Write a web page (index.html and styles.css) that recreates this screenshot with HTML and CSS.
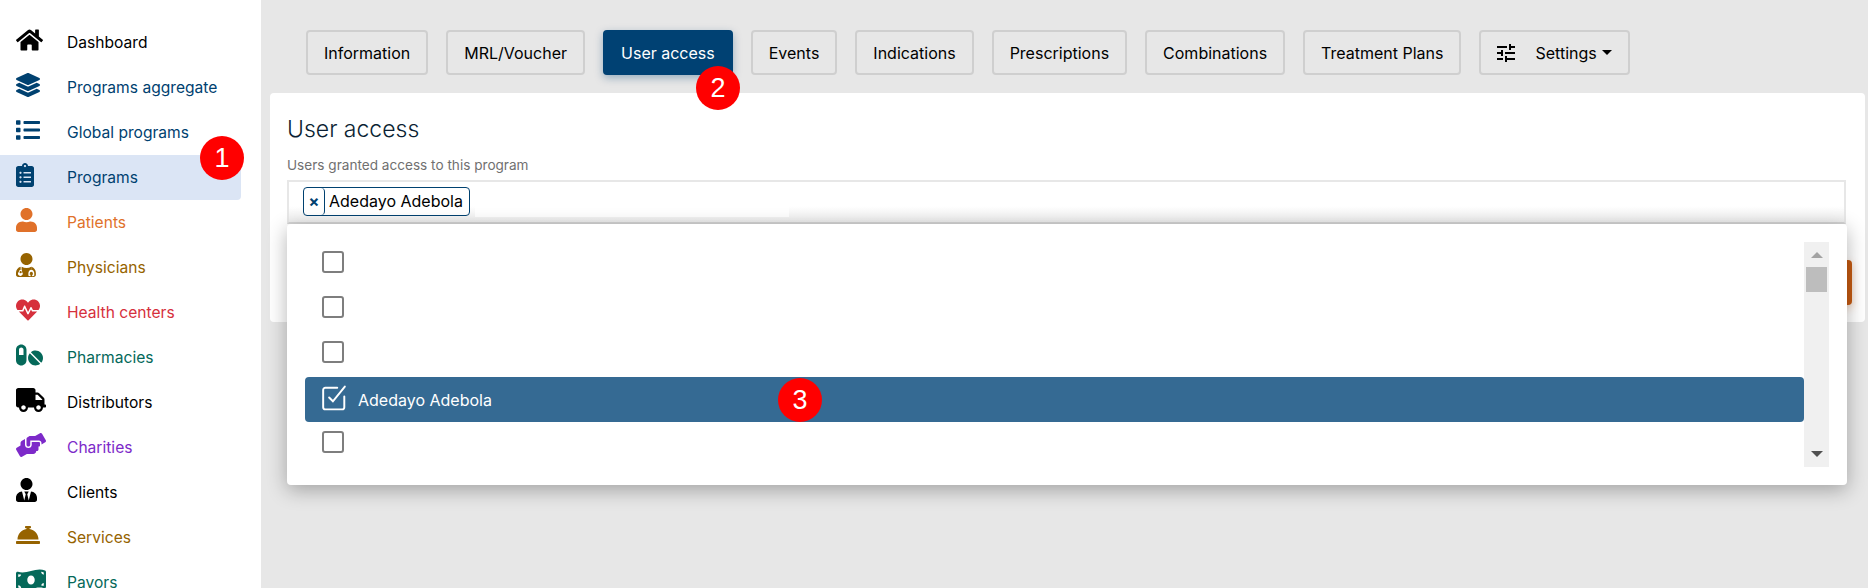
FILE: index.html
```html
<!DOCTYPE html>
<html lang="en">
<head>
<meta charset="utf-8">
<title>User access</title>
<link rel="stylesheet" href="styles.css">
</head>
<body>
<div class="app">
  <nav class="sidebar">
    <a class="nav-item c-black"><span class="nav-icon"><svg viewBox="0 0 576 512"><path d="M280.37 148.26L96 300.11V464a16 16 0 0 0 16 16l112.06-.29a16 16 0 0 0 15.92-16V368a16 16 0 0 1 16-16h64a16 16 0 0 1 16 16v95.64a16 16 0 0 0 16 16.05L464 480a16 16 0 0 0 16-16V300L295.67 148.26a12.19 12.19 0 0 0-15.3 0zM571.6 251.47L488 182.56V44.05a12 12 0 0 0-12-12h-56a12 12 0 0 0-12 12v72.61L318.47 43a48 48 0 0 0-61 0L4.34 251.47a12 12 0 0 0-1.6 16.9l25.5 31A12 12 0 0 0 45.15 301l235.22-193.74a12.19 12.19 0 0 1 15.3 0L530.9 301a12 12 0 0 0 16.9-1.6l25.5-31a12 12 0 0 0-1.7-16.93z"/></svg></span>Dashboard</a>
    <a class="nav-item c-navy"><span class="nav-icon"><svg viewBox="0 0 512 512"><path d="M12.41 148.02l232.94 105.67c6.8 3.09 14.49 3.09 21.29 0l232.94-105.67c16.55-7.51 16.55-32.52 0-40.03L266.65 2.31a25.607 25.607 0 0 0-21.29 0L12.41 107.98c-16.55 7.51-16.55 32.53 0 40.04zm487.18 88.28l-58.09-26.33-161.64 73.27c-7.56 3.43-15.59 5.17-23.86 5.17s-16.29-1.74-23.86-5.17L70.51 209.97l-58.1 26.33c-16.55 7.5-16.55 32.5 0 40l232.94 105.59c6.8 3.08 14.49 3.08 21.29 0L499.59 276.3c16.55-7.5 16.55-32.5 0-40zm0 127.8l-57.87-26.23-161.86 73.37c-7.56 3.43-15.59 5.17-23.86 5.17s-16.29-1.74-23.86-5.17L70.29 337.87 12.41 364.1c-16.55 7.5-16.55 32.5 0 40l232.94 105.59c6.8 3.08 14.49 3.08 21.29 0L499.59 404.1c16.55-7.5 16.55-32.5 0-40z"/></svg></span>Programs aggregate</a>
    <a class="nav-item c-navy"><span class="nav-icon"><svg viewBox="0 0 512 512"><path d="M80 368H16a16 16 0 0 0-16 16v64a16 16 0 0 0 16 16h64a16 16 0 0 0 16-16v-64a16 16 0 0 0-16-16zm0-320H16A16 16 0 0 0 0 64v64a16 16 0 0 0 16 16h64a16 16 0 0 0 16-16V64a16 16 0 0 0-16-16zm0 160H16a16 16 0 0 0-16 16v64a16 16 0 0 0 16 16h64a16 16 0 0 0 16-16v-64a16 16 0 0 0-16-16zm416 176H176a16 16 0 0 0-16 16v32a16 16 0 0 0 16 16h320a16 16 0 0 0 16-16v-32a16 16 0 0 0-16-16zm0-320H176a16 16 0 0 0-16 16v32a16 16 0 0 0 16 16h320a16 16 0 0 0 16-16V80a16 16 0 0 0-16-16zm0 160H176a16 16 0 0 0-16 16v32a16 16 0 0 0 16 16h320a16 16 0 0 0 16-16v-32a16 16 0 0 0-16-16z"/></svg></span>Global programs</a>
    <a class="nav-item c-navy is-active"><span class="nav-icon"><svg viewBox="0 0 384 512"><path d="M336 64h-80c0-35.3-28.7-64-64-64s-64 28.7-64 64H48C21.5 64 0 85.5 0 112v352c0 26.5 21.5 48 48 48h288c26.5 0 48-21.5 48-48V112c0-26.5-21.5-48-48-48zM96 424c-13.3 0-24-10.7-24-24s10.7-24 24-24 24 10.7 24 24-10.7 24-24 24zm0-96c-13.3 0-24-10.7-24-24s10.7-24 24-24 24 10.7 24 24-10.7 24-24 24zm0-96c-13.3 0-24-10.7-24-24s10.7-24 24-24 24 10.7 24 24-10.7 24-24 24zm96-192c13.3 0 24 10.7 24 24s-10.7 24-24 24-24-10.7-24-24 10.7-24 24-24zm128 368c0 4.4-3.6 8-8 8H168c-4.4 0-8-3.6-8-8v-16c0-4.4 3.6-8 8-8h144c4.4 0 8 3.6 8 8v16zm0-96c0 4.4-3.6 8-8 8H168c-4.4 0-8-3.6-8-8v-16c0-4.4 3.6-8 8-8h144c4.4 0 8 3.6 8 8v16zm0-96c0 4.4-3.6 8-8 8H168c-4.4 0-8-3.6-8-8v-16c0-4.4 3.6-8 8-8h144c4.4 0 8 3.6 8 8v16z"/></svg></span>Programs</a>
    <a class="nav-item c-orange"><span class="nav-icon"><svg viewBox="0 0 448 512"><path d="M224 256c70.7 0 128-57.3 128-128S294.7 0 224 0 96 57.3 96 128s57.3 128 128 128zm89.6 32h-16.7c-22.2 10.2-46.9 16-72.9 16s-50.6-5.8-72.9-16h-16.7C60.2 288 0 348.2 0 422.4V464c0 26.5 21.5 48 48 48h352c26.5 0 48-21.5 48-48v-41.6c0-74.2-60.2-134.4-134.4-134.4z"/></svg></span>Patients</a>
    <a class="nav-item c-brown"><span class="nav-icon"><svg viewBox="0 0 448 512"><path d="M224 256c70.7 0 128-57.3 128-128S294.7 0 224 0 96 57.3 96 128s57.3 128 128 128zM0 422.4C0 360 42 308 99 292v66a48 48 0 0 0-40 47c0 0 0 0 0 0a49 49 0 1 0 68 0 48 48 0 0 0-8-47v-64a220 220 0 0 0 210 0v60c-38 8-65 40-65 78v42c0 8 6 15 14 16l30 4 3-30-17-2v-30a33 33 0 0 1 66 0v30l-17 2 3 30 30-4c8-1 14-8 14-16v-42c0-38-27-70-65-78v-60c57 16 99 68 99 130V464c0 26.5-21.5 48-48 48H48c-26.5 0-48-21.5-48-48zM99 432a24 24 0 1 0 0-48 24 24 0 0 0 0 48z" fill-rule="evenodd"/></svg></span>Physicians</a>
    <a class="nav-item c-red"><span class="nav-icon"><svg viewBox="0 0 512 512"><path d="M320.2 243.8l-49.7 99.4c-6 12.1-23.4 11.7-28.9-.6l-56.9-126.3-30 71.7H60.6l182.5 186.5c7.1 7.3 18.6 7.3 25.7 0L451.4 288H342.3l-22.1-44.2zM473.7 73.9l-2.4-2.5c-51.5-52.6-135.8-52.6-187.4 0L256 100l-27.9-28.5c-51.5-52.7-135.9-52.7-187.4 0l-2.4 2.4C-10.4 123.7-12.5 203 31 256h102.4l35.9-86.2c5.4-12.9 23.6-13.2 29.4-.4l58.2 129.3 49-97.9c5.9-11.8 22.7-11.8 28.6 0l27.6 55.2H481c43.5-53 41.4-132.3-7.3-182.1z"/></svg></span>Health centers</a>
    <a class="nav-item c-teal"><span class="nav-icon"><svg viewBox="0 0 576 512"><path d="M112 32C50.1 32 0 82.1 0 144v224c0 61.9 50.1 112 112 112s112-50.1 112-112V144c0-61.9-50.1-112-112-112zm48 224H64V144c0-26.5 21.5-48 48-48s48 21.5 48 48v112zm139.7-29.7c-3.5-3.5-9.4-3.1-12.3.8-45.3 62.5-40.4 150.1 15.9 206.4 56.3 56.3 143.9 61.2 206.4 15.9 4-2.9 4.3-8.8.8-12.3L299.7 226.3zm229.8-19c-56.3-56.3-143.9-61.2-206.4-15.9-4 2.9-4.3 8.8-.8 12.3l210.8 210.8c3.5 3.5 9.4 3.1 12.3-.8 45.3-62.6 40.5-150.1-15.9-206.4z"/></svg></span>Pharmacies</a>
    <a class="nav-item c-black"><span class="nav-icon"><svg viewBox="0 0 640 512"><path d="M624 352h-16V243.9c0-12.7-5.1-24.9-14.1-33.9L494 110.1c-9-9-21.2-14.1-33.9-14.1H416V48c0-26.5-21.5-48-48-48H48C21.5 0 0 21.5 0 48v320c0 26.5 21.5 48 48 48h16c0 53 43 96 96 96s96-43 96-96h128c0 53 43 96 96 96s96-43 96-96h48c8.8 0 16-7.2 16-16v-32c0-8.8-7.2-16-16-16zM160 464c-26.5 0-48-21.5-48-48s21.5-48 48-48 48 21.5 48 48-21.5 48-48 48zm320 0c-26.5 0-48-21.5-48-48s21.5-48 48-48 48 21.5 48 48-21.5 48-48 48zm80-208H416V144h44.1l99.9 99.9V256z"/></svg></span>Distributors</a>
    <a class="nav-item c-purple"><span class="nav-icon"><svg viewBox="0 0 640 512"><path d="M488 192H336v56c0 39.7-32.3 72-72 72s-72-32.3-72-72V126.4l-64.9 39C107.8 176.9 96 197.8 96 220.2v47.3l-80 46.2C.7 322.5-4.6 342.1 4.3 357.4l80 138.6c8.8 15.3 28.4 20.5 43.7 11.7L231.4 448H368c35.3 0 64-28.7 64-64h16c17.7 0 32-14.3 32-32v-64h8c13.3 0 24-10.7 24-24v-48c0-13.3-10.7-24-24-24zm147.7-37.4L555.7 16C546.9.7 527.3-4.5 512 4.3L408.6 64H306.4c-12 0-23.7 3.4-33.9 9.7L239 94.6c-9.4 5.8-15 16.1-15 27.1V248c0 22.1 17.9 40 40 40s40-17.9 40-40v-88h184c30.9 0 56 25.1 56 56v28.5l80-46.2c15.3-8.9 20.5-28.4 11.7-43.7z"/></svg></span>Charities</a>
    <a class="nav-item c-black"><span class="nav-icon"><svg viewBox="0 0 448 512"><path d="M224 256c70.7 0 128-57.3 128-128S294.7 0 224 0 96 57.3 96 128s57.3 128 128 128zm95.8 32.6L272 480l-32-136 32-56h-96l32 56-32 136-47.8-191.4C56.9 292 0 350.3 0 422.4V464c0 26.5 21.5 48 48 48h352c26.5 0 48-21.5 48-48v-41.6c0-72.1-56.9-130.4-128.2-133.8z"/></svg></span>Clients</a>
    <a class="nav-item c-brown"><span class="nav-icon"><svg viewBox="0 0 512 512"><path d="M288 130.54V112h16c8.84 0 16-7.16 16-16V80c0-8.84-7.16-16-16-16h-96c-8.84 0-16 7.16-16 16v16c0 8.84 7.16 16 16 16h16v18.54C115.49 146.11 32 239.18 32 352h448c0-112.82-83.49-205.89-192-221.46zM496 384H16c-8.84 0-16 7.16-16 16v32c0 8.84 7.16 16 16 16h480c8.84 0 16-7.16 16-16v-32c0-8.84-7.16-16-16-16z"/></svg></span>Services</a>
    <a class="nav-item c-teal"><span class="nav-icon"><svg viewBox="0 0 640 512"><path d="M621.16 54.46C582.37 38.19 543.55 32 504.75 32c-123.17-.01-246.33 62.34-369.5 62.34-30.89 0-61.76-3.92-92.65-13.72-3.47-1.1-6.95-1.62-10.35-1.62C15.04 79 0 92.32 0 110.81v317.26c0 12.63 7.23 24.6 18.84 29.46C57.63 473.81 96.45 480 135.25 480c123.17 0 246.34-62.35 369.51-62.35 30.89 0 61.76 3.92 92.65 13.72 3.47 1.1 6.95 1.62 10.35 1.62 17.21 0 32.25-13.32 32.25-31.81V83.93c-.01-12.64-7.24-24.6-18.85-29.47zM48 132.22c20.12 5.04 41.12 7.57 62.72 8.93C104.84 170.54 79 192.69 48 192.69v-60.47zm0 285v-47.78c34.37 0 62.18 27.27 63.71 61.4-22.53-1.81-43.59-6.31-63.71-13.62zM320 352c-44.19 0-80-42.99-80-96 0-53.02 35.82-96 80-96s80 42.98 80 96c0 53.03-35.83 96-80 96zm272 27.78c-17.52-4.39-35.71-6.85-54.32-8.44 5.87-26.08 27.5-45.88 54.32-49.28v57.72zm0-236.11c-30.89-3.91-54.86-29.7-55.81-61.55 19.54 2.17 38.09 6.23 55.81 12.66v48.89z"/></svg></span>Payors</a>
    <span class="badge badge-one">1</span>
  </nav>
  <main class="content">
    <div class="tabs">
      <button class="tab">Information</button>
      <button class="tab">MRL/Voucher</button>
      <button class="tab tab-active">User access</button>
      <button class="tab">Events</button>
      <button class="tab">Indications</button>
      <button class="tab">Prescriptions</button>
      <button class="tab">Combinations</button>
      <button class="tab">Treatment Plans</button>
      <button class="tab"><svg class="tune" viewBox="0 0 24 24"><path d="M3 17v2h6v-2H3zM3 5v2h10V5H3zm10 16v-2h8v-2h-8v-2h-2v6h2zM7 9v2H3v2h4v2h2V9H7zm14 4v-2H11v2h10zm-6-4h2V7h4V5h-4V3h-2v6z"/></svg>Settings<span class="caret"></span></button>
      <span class="badge badge-two">2</span>
    </div>
    <section class="card">
      <h2 class="card-title">User access</h2>
      <label class="field-label">Users granted access to this program</label>
      <div class="multi-select">
        <span class="chip"><span class="chip-x">×</span><span class="chip-text">Adedayo Adebola</span></span>
        <span class="search-strip"></span>
      </div>
      <div class="card-actions"><span class="save-button"></span></div>
      <div class="dropdown">
        <ul class="options">
          <li class="option"><span class="check"></span></li>
          <li class="option"><span class="check"></span></li>
          <li class="option"><span class="check"></span></li>
          <li class="option is-selected"><svg class="check-on" viewBox="0 0 24 24"><path d="M15 2.5H4a2 2 0 0 0-2 2v16a2 2 0 0 0 2 2h15.5a2 2 0 0 0 2-2v-10" fill="none" stroke="#fff" stroke-width="1.8" stroke-linecap="round"/><path d="M7.5 11.5l3.5 3.5L22 1.5" fill="none" stroke="#fff" stroke-width="1.8" stroke-linecap="round"/></svg><span>Adedayo Adebola</span></li>
          <li class="option"><span class="check"></span></li>
        </ul>
        <div class="scrollbar">
          <span class="arrow-up"></span>
          <span class="thumb"></span>
          <span class="arrow-down"></span>
        </div>
        <span class="badge badge-three">3</span>
      </div>
    </section>
  </main>
</div>
</body>
</html>
```
FILE: styles.css
```css
* { box-sizing: border-box; }
html, body { margin: 0; height: 100%; overflow: hidden; }
body { font-family: Inter, "Liberation Sans", sans-serif; background: #e7e7e7; color: #000; }
.app { display: flex; height: 588px; overflow: hidden; }

.sidebar { position: relative; width: 261px; flex: none; height: 588px; padding: 20px 20px 0 0; background: #fff; overflow: hidden; }
.nav-item { display: flex; align-items: center; height: 45px; padding-left: 16px; font-size: 15.6px; border-radius: 0 4px 4px 0; }
.nav-icon { width: 51px; flex: none; display: flex; margin-top: -5px; }
.nav-icon svg { height: 24px; width: auto; fill: currentColor; }
.is-active { background: #dbe5f5; }
.c-black { color: #000; }
.c-navy { color: #004170; }
.c-orange { color: #e0712a; }
.c-brown { color: #966300; }
.c-red { color: #d6303c; }
.c-teal { color: #05695a; }
.c-purple { color: #7d2ac9; }

.content { flex: 1; padding: 30px 3px 0 9px; min-width: 0; }
.tabs { position: relative; display: flex; gap: 18px; height: 45px; margin-left: 36px; }
.tab { height: 45px; padding: 0 16px; border: 2px solid #cfcfcf; border-radius: 4px; background: #e7e7e7; color: #000; font: 16px Inter, "Liberation Sans", sans-serif; display: flex; align-items: center; white-space: nowrap; flex: none; }
.tab-active { background: #004173; border-color: #004173; color: #fff; box-shadow: 0 3px 8px rgba(0, 65, 115, .35); }
.tune { width: 24px; height: 24px; margin: 0 17px 0 -3px; }
.caret { width: 0; height: 0; margin-left: 5px; border-style: solid; border-width: 5px 5px 0; border-color: #000 transparent transparent; }

.card { position: relative; height: 229px; margin-top: 18px; padding: 22px 19px 0 17px; background: #fff; border-radius: 4px; }
.card-title { margin: 0; font-size: 23px; font-weight: 300; line-height: 28px; color: #0b1f33; }
.field-label { display: block; margin-top: 13px; font-size: 13.6px; line-height: 18px; color: #707070; }
.multi-select { position: relative; display: flex; height: 44px; margin-top: 6px; padding: 5px 0 0 14px; border: 2px solid #e7e7e7; border-bottom-color: #d4d4d4; background: linear-gradient(#fff 0, #fff 60%, #eee 100%); }
.chip { display: flex; align-items: stretch; height: 29px; border: 1px solid #004170; border-radius: 4px; font-size: 16px; line-height: 27px; background: #fff; }
.chip-x { width: 21px; text-align: center; border-right: 1px solid #004170; border-radius: 4px; color: #004170; font-weight: 700; }
.chip-text { padding: 0 6px 0 4px; }
.search-strip { width: 314px; height: 30px; margin: 0 0 0 5px; background: #fff; }

.card-actions { display: flex; justify-content: flex-end; margin-top: 36px; margin-right: -6px; }
.save-button { width: 120px; height: 45px; background: #c55a11; border-radius: 4px; box-shadow: 0 3px 8px rgba(197, 90, 17, .3); }

.dropdown { position: absolute; left: 17px; top: 131px; width: 1560px; height: 261px; display: flex; align-items: flex-start; padding: 18px 18px 0 18px; background: #fff; border-radius: 4px; box-shadow: 0 5px 20px rgba(0, 0, 0, .3); }
.options { flex: 1; margin: 0; padding: 0; list-style: none; }
.option { display: flex; align-items: center; height: 45px; padding-left: 17px; border-radius: 4px; font-size: 16px; color: #000; }
.check { width: 22px; height: 22px; margin-top: -5px; border: 2px solid #7e7e7e; border-radius: 3px; }
.is-selected { background: #356a93; color: #fff; }
.check-on { width: 26px; height: 26px; margin: -4px 11px 0 -1px; }
.scrollbar { position: relative; width: 25px; height: 225px; background: #f0f0f0; flex: none; }
.thumb { position: absolute; left: 2px; top: 25px; width: 21px; height: 25px; background: #bdbdbd; }
.arrow-up, .arrow-down { position: absolute; left: 7px; width: 0; height: 0; border-style: solid; border-color: transparent; }
.arrow-up { top: 10px; border-width: 0 6px 6px; border-bottom-color: #a3a3a3; }
.arrow-down { bottom: 10px; border-width: 6px 6px 0; border-top-color: #505050; }

.badge { position: absolute; display: flex; align-items: center; justify-content: center; width: 44px; height: 44px; background: #f00; color: #fff; border-radius: 50%; font: 27px "Liberation Sans", Arial, sans-serif; z-index: 5; }
.badge-one { left: 200px; top: 136px; }
.badge-two { left: 390px; top: 36px; }
.badge-three { left: 491px; top: 154px; }
```
